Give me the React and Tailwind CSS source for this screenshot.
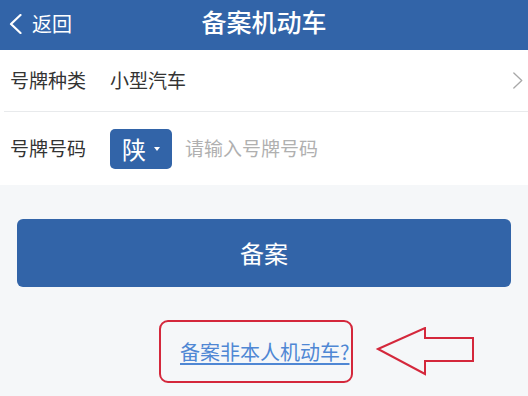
import React from "react";

function Chevron({ dir = "left", className, width = 2 }) {
  return (
    <svg viewBox="0 0 12 20" className={className} fill="none" stroke="currentColor" strokeWidth={width} strokeLinecap="round" strokeLinejoin="round">
      {dir === "left" ? <path d="M11 1 L1.5 10 L11 19" /> : <path d="M1 1 L10.5 10 L1 19" />}
    </svg>
  );
}

export default function App() {
  return (
    <div
      className="w-[528px] h-[396px] overflow-hidden bg-[#f5f7f9]"
      style={{ fontFamily: '"Noto Sans CJK SC", "Noto Sans", sans-serif' }}
    >
      {/* header */}
      <div className="h-[50px] bg-[#3264a8] grid grid-cols-[1fr_auto_1fr] items-center text-white">
        <div className="flex items-center pl-[9px] gap-[10px] pb-[3px]">
          <Chevron dir="left" className="w-[13px] h-[20px]" width={2.2} />
          <span className="text-[20px] leading-none">返回</span>
        </div>
        <h1 className="text-[25px] font-medium leading-none pb-[8px]">备案机动车</h1>
        <div />
      </div>

      {/* form */}
      <div className="bg-white">
        <div className="h-[61px] flex items-center pl-[10px] pr-[5px] text-[19px] text-[#333]">
          <span className="w-[100px]">号牌种类</span>
          <span className="flex-1">小型汽车</span>
          <Chevron dir="right" className="w-[10px] h-[19px] text-[#a8a8a8]" width={1.6} />
        </div>
        <div className="ml-[4px] h-px bg-[#e8eaec]" />
        <div className="h-[73px] flex items-center pl-[10px] text-[19px]">
          <span className="w-[100px] text-[#333]">号牌号码</span>
          <button className="w-[62px] h-[40px] rounded-[5px] bg-[#3264a8] text-white flex items-center pl-[12px] gap-[8px]">
            <span className="text-[24px] leading-none">陕</span>
            <span className="w-0 h-0 border-l-[3.5px] border-r-[3.5px] border-t-[4px] border-l-transparent border-r-transparent border-t-white" />
          </button>
          <span className="ml-[13px] text-[#b0b0b0]">请输入号牌号码</span>
        </div>
      </div>

      {/* submit */}
      <div className="px-[17px] pt-[34px]">
        <button className="w-full h-[68px] rounded-[6px] bg-[#3264a8] text-white text-[24px]">备案</button>
      </div>

      {/* link + annotation */}
      <div className="flex items-center pt-[33px] pl-[159px]">
        <div className="w-[194px] h-[63px] rounded-[9px] border-2 border-[#d4283c] flex items-center pl-[19px]">
          <a className="text-[20px] text-[#4f87d4] underline underline-offset-[3px] leading-none">备案非本人机动车?</a>
        </div>
        <svg width="104" height="50" viewBox="0 0 104 50" className="ml-[22px]">
          <polygon points="3,22 50,1 50,11 98,11 98,34 50,34 50,47" fill="none" stroke="#d4283c" strokeWidth="2" strokeLinejoin="miter" />
        </svg>
      </div>
    </div>
  );
}
